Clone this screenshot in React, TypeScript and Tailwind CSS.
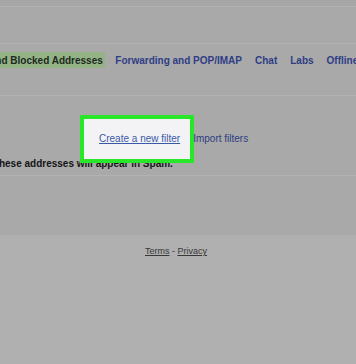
const tabs = ['Forwarding and POP/IMAP', 'Chat', 'Labs', 'Offline'];

const App = () => {
  return (
    <div className="relative w-[356px] h-[364px] overflow-hidden bg-[#a9a9a9] font-['Liberation_Sans',Arial,sans-serif] flex flex-col">
      <div className="h-[6px] bg-[#a6a6a6]" />
      <div className="h-px bg-[#b1b1b1]" />
      <div className="h-[36px]" />
      <div className="h-px bg-[#b1b1b1]" />

      {/* tabs */}
      <div className="h-[51px] pt-[8px]">
        <div className="flex items-center h-[16px] ml-[-49px] whitespace-nowrap text-[10px] font-bold">
          <div className="h-full flex items-center pl-[6px] pr-[2px] bg-[#93b386] text-[#1e2a1e]">
            Filters and Blocked Addresses
          </div>
          <div className="flex ml-[4px]">
            {tabs.map((t) => (
              <div key={t} className="px-[6.5px] text-[#2f3d86]">
                {t}
              </div>
            ))}
          </div>
        </div>
      </div>
      <div className="h-px bg-[#b1b1b1]" />

      {/* filters */}
      <div className="pt-[37px] pb-[5px]">
        <div className="relative z-20 flex pl-[99px] gap-[13px] text-[10px] leading-[12px] whitespace-nowrap">
          <a className="underline text-[#3b58a8]">Create a new filter</a>
          <span className="text-[#2e3e82]">Import filters</span>
        </div>
        <div className="mt-[13px] ml-[-80px] text-[10px] leading-[12px] font-bold text-[#151515] whitespace-nowrap">
          Messages from these addresses will appear in Spam.
        </div>
      </div>
      <div className="h-px bg-[#b1b1b1]" />
      <div className="h-[59px]" />

      {/* footer */}
      <div className="flex-1 bg-[#b0b0b0] pt-[10px] flex justify-center">
        <div className="ml-[-4px] text-[9px] leading-[12px] text-[#383838] whitespace-nowrap">
          <a className="underline">Terms</a> - <a className="underline">Privacy</a>
        </div>
      </div>

      <div className="absolute z-10 left-[80px] top-[115px] w-[114px] h-[48px] border-4 border-[#29e629] bg-[#f3f3f6]" />
    </div>
  );
};

export default App;
